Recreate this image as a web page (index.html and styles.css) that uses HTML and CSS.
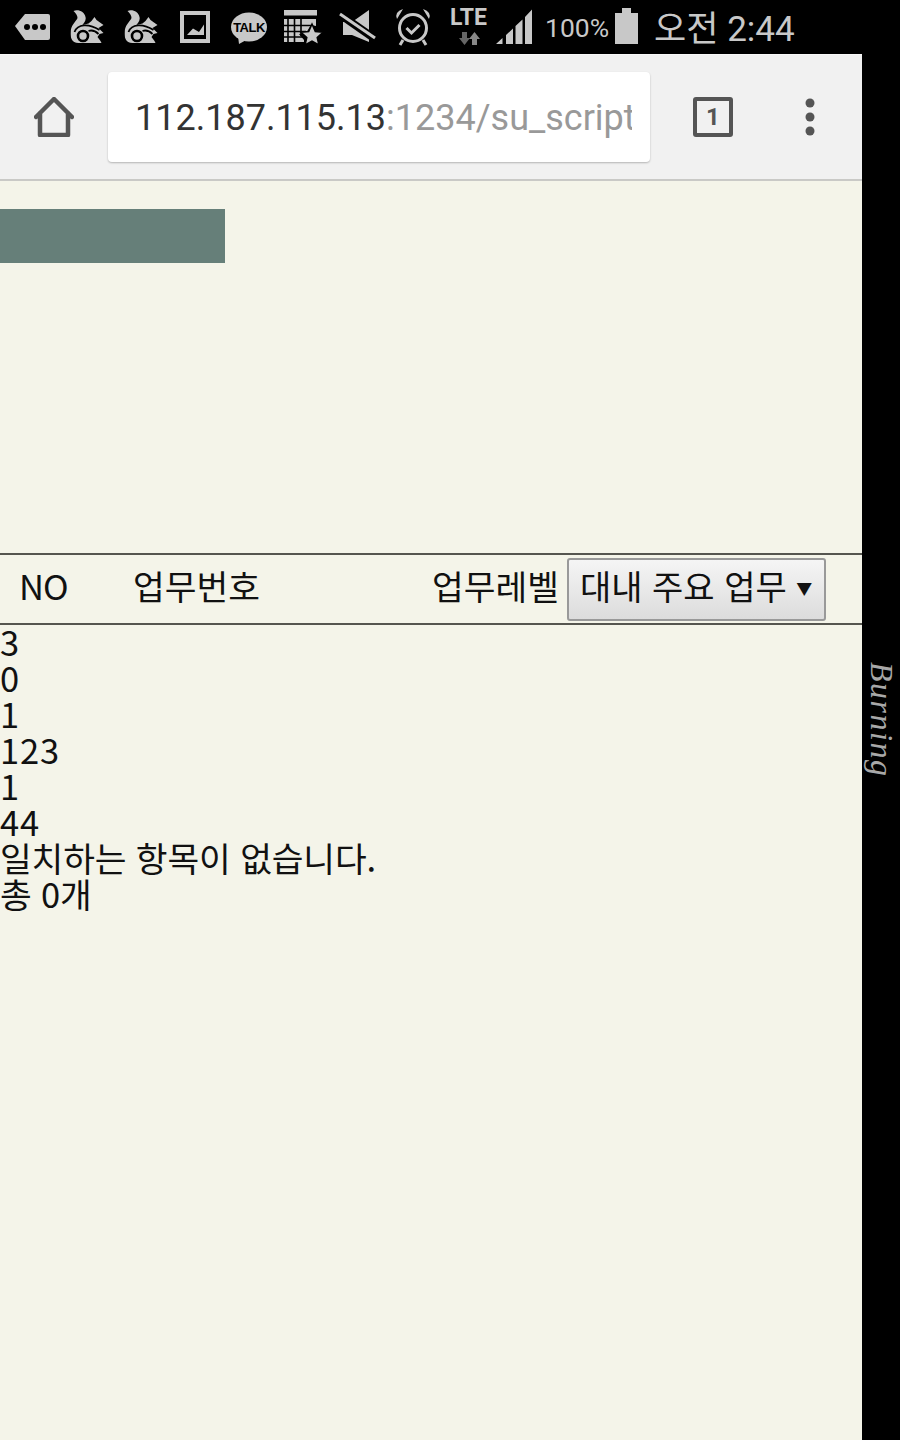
FILE: index.html
```html
<!DOCTYPE html>
<html lang="ko">
<head>
  <meta charset="UTF-8" />
  <meta name="viewport" content="width=device-width, initial-scale=1.0"/>
  <title>업무 목록</title>
  <link rel="stylesheet" href="styles.css">
</head>
<body>
<svg class="defs" width="0" height="0" aria-hidden="true">
  <symbol id="squirrel" viewBox="0 0 34 34">
    <path d="M3 1 C8 -1 14 2 15 7 C16 11 13 13 12 15 L18 13.500 L21 11 L24 7 L26 10 L33 15 L28 18 L33 23 L29 24 L27 27 L30 31 L31 33 L8 33 C1 33 0 27 0 23 C0 15 6 11 7 8 C7 5 5 3 3 1 Z"/>
    <path class="cut-line" d="M4 22 C7 14 18 13 29 20"/>
    <path class="cut-line" d="M18 21 C21 20 25 21 28 24"/>
    <circle class="cut-ring" cx="12.500" cy="26" r="5"/>
  </symbol>
</svg>

<div class="status-bar">
  <div class="notify-icons">
    <svg class="slot" viewBox="6 0 54 54">
      <path d="M15 26 L25 14 H48 Q50 14 50 16 V38 Q50 40 48 40 H25 Z"/>
      <circle class="cut" cx="27" cy="27" r="3"/><circle class="cut" cx="35" cy="27" r="3"/><circle class="cut" cx="43" cy="27" r="3"/>
    </svg>
    <svg class="slot" viewBox="60 0 54 54"><use href="#squirrel" x="70.500" y="10" width="34" height="34"/></svg>
    <svg class="slot" viewBox="114 0 54 54"><use href="#squirrel" x="124.500" y="10" width="34" height="34"/></svg>
    <svg class="slot" viewBox="168 0 54 54">
      <rect x="182" y="13" width="26" height="28" fill="none" stroke="currentColor" stroke-width="4"/>
      <path d="M187 35 L193 28.500 L199 32 L204 24.500 V35 Z"/>
    </svg>
    <svg class="slot" viewBox="222 0 54 54">
      <ellipse cx="249" cy="27" rx="18" ry="14.500"/>
      <path d="M238 36 L239 44 L248 39 Z"/>
      <text class="talk" x="249" y="31.500">TALK</text>
    </svg>
    <svg class="slot" viewBox="276 0 54 54">
      <rect x="284" y="10" width="33" height="5.500"/>
      <path d="M284 19 H316 V26 L311 25 L306 33 L299 34 L304 40 V42 H284 Z"/>
      <path class="grid-line" d="M288 19 V42 M294.500 19 V42 M301 19 V36 M284 25.500 H312 M284 31.500 H306 M284 37 H303"/>
      <path class="star" d="M312 24 L315.300 31.500 L323 32.300 L317.200 37.500 L318.900 45 L312 41 L305.100 45 L306.800 37.500 L301 32.300 L308.700 31.500 Z"/>
    </svg>
    <svg class="slot" viewBox="330 0 54 54">
      <path d="M369 10 L352 22 H343 V35 H352 L369 42 Z"/>
      <path class="cut-stroke" d="M338 13 L378 41"/>
      <path class="gray-stroke" d="M340 14 L375 38"/>
    </svg>
    <svg class="slot" viewBox="384 0 54 54">
      <circle cx="413" cy="28" r="13.500" fill="none" stroke="currentColor" stroke-width="3"/>
      <path d="M397 19 Q394 12 403 9 Z M429 19 Q432 12 423 9 Z"/>
      <path class="gray-stroke" d="M406.500 28 L411.500 33 L419.500 25"/>
      <path class="gray-stroke" d="M403 40 L400 45 M423 40 L426 45"/>
    </svg>
    <svg class="slot" viewBox="438 0 54 54">
      <text class="lte" x="468.500" y="25">LTE</text>
      <path class="arrow-down" d="M462 32 H467 V38 H470 L464.500 45 L459 38 H462 Z"/>
      <path class="arrow-up" d="M472 45 H477 V39 H480 L474.500 32 L469 39 H472 Z"/>
    </svg>
    <svg class="signal" viewBox="492 0 40 54">
      <path d="M496 44 L502.500 38 V44 Z M506 35 L513 28.500 V44 H506 Z M515.500 26 L522.500 19.500 V44 H515.500 Z M525 17 L532 9.500 V44 H525 Z"/>
    </svg>
  </div>
  <span class="battery-text">100%</span>
  <svg class="battery" viewBox="0 0 24 38">
    <path d="M7 0 H16 V5 H23 V36 H0 V5 H7 Z"/>
  </svg>
  <span class="clock">오전 2:44</span>
</div>

<div class="screen">
  <div class="main">
    <div class="toolbar">
      <svg class="home" viewBox="34 97 40 40">
        <path d="M36 117 L54 99 L72 117 M40 113 V135 H68 V113"/>
      </svg>
      <div class="url-box"><span class="host">112.187.115.13</span>:1234/su_script</div>
      <div class="tab-count">1</div>
      <svg class="menu-dots" viewBox="0 0 10 38">
        <circle cx="5" cy="5" r="4.500"/><circle cx="5" cy="19" r="4.500"/><circle cx="5" cy="33" r="4.500"/>
      </svg>
    </div>

    <div class="page">
      <div class="title-bar"></div>

      <div class="table-head">
        <span class="col-no">NO</span>
        <span class="col-num">업무번호</span>
        <span class="col-level">업무레벨</span>
        <button class="level-select">대내 주요 업무 <span class="caret">▼</span></button>
      </div>

      <div class="rows">
        <div class="num">3</div>
        <div class="num">0</div>
        <div class="num">1</div>
        <div class="num">123</div>
        <div class="num">1</div>
        <div class="num">44</div>
        <div>일치하는 항목이 없습니다.</div>
        <div>총 0개</div>
      </div>
    </div>
  </div>

  <div class="rail"><span class="burning">Burning</span></div>
</div>
</body>
</html>
```

FILE: styles.css
```css
html, body {
  margin: 0;
  height: 1440px;
  overflow: hidden;
  background-color: #000;
}
.defs {
  position: absolute;
}

/* status bar */
.status-bar {
  height: 54px;
  background-color: #000;
  color: #c8c8c8;
  display: flex;
  align-items: center;
  padding-left: 6px;
}
.notify-icons {
  display: flex;
}
.status-bar svg {
  display: block;
  fill: currentColor;
}
.slot {
  width: 54px;
  height: 54px;
}
.signal {
  width: 40px;
  height: 54px;
}
.cut {
  fill: #000;
}
.cut-line {
  fill: none;
  stroke: #000;
  stroke-width: 1.800;
}
.cut-ring {
  fill: #c8c8c8;
  stroke: #000;
  stroke-width: 2.600;
}
.grid-line {
  fill: none;
  stroke: #000;
  stroke-width: 1.600;
}
.status-bar .star {
  fill: #c8c8c8;
  stroke: #000;
  stroke-width: 1.500;
}
.cut-stroke {
  fill: none;
  stroke: #000;
  stroke-width: 8;
}
.gray-stroke {
  fill: none;
  stroke: #c8c8c8;
  stroke-width: 3;
}
.talk {
  font-family: "Liberation Sans", sans-serif;
  font-size: 13px;
  font-weight: bold;
  text-anchor: middle;
  fill: #000;
  letter-spacing: -0.500px;
}
.lte {
  font-family: Roboto, sans-serif;
  font-size: 23px;
  font-weight: bold;
  text-anchor: middle;
}
.status-bar .arrow-down {
  fill: #666;
}
.status-bar .arrow-up {
  fill: #888;
}
.battery-text {
  margin-left: 13px;
  font-family: Roboto, sans-serif;
  font-size: 26.500px;
}
.battery {
  width: 24px;
  height: 38px;
  margin-left: 6px;
}
.clock {
  margin-left: 15px;
  padding-top: 5px;
  font-family: Roboto, "Noto Sans CJK KR", sans-serif;
  font-size: 35px;
  line-height: 49px;
}

/* browser chrome */
.screen {
  display: flex;
  height: 1386px;
}
.main {
  width: 862px;
  display: flex;
  flex-direction: column;
  background-color: #f4f4e9;
}
.toolbar {
  height: 127px;
  box-sizing: border-box;
  background-color: #f1f1f1;
  border-top: 1px solid #f8f8f8;
  border-bottom: 2px solid #c9c9c6;
  display: flex;
  align-items: center;
  padding-left: 34px;
}
.home {
  width: 40px;
  height: 40px;
  fill: none;
  stroke: #555;
  stroke-width: 4.500;
  stroke-linejoin: round;
  stroke-linecap: round;
}
.url-box {
  width: 542px;
  height: 90px;
  box-sizing: border-box;
  margin-left: 34px;
  padding-left: 27px;
  margin-right: 43px;
  background-color: #fff;
  border-right: 18px solid #fff;
  border-radius: 4px;
  box-shadow: 0 1px 2px rgba(0,0,0,0.25);
  font-family: Roboto, sans-serif;
  font-size: 36px;
  line-height: 93px;
  color: #999;
  white-space: nowrap;
  overflow: hidden;
}
.host {
  color: #333;
}
.tab-count {
  width: 40px;
  height: 40px;
  box-sizing: border-box;
  border: 4px solid #555;
  border-radius: 3px;
  font-family: Roboto, sans-serif;
  font-size: 24px;
  font-weight: bold;
  line-height: 33px;
  text-align: center;
  color: #555;
}
.menu-dots {
  width: 10px;
  height: 38px;
  margin-left: 72px;
  fill: #555;
}

/* page */
.page {
  flex: 1;
  font-family: "Noto Sans CJK KR", sans-serif;
  font-size: 34.500px;
  color: #111;
}
.title-bar {
  width: 225px;
  height: 54px;
  margin-top: 28px;
  background-color: #667f79;
}
.table-head {
  height: 72px;
  box-sizing: border-box;
  margin-top: 290px;
  border-top: 2px solid #55554f;
  border-bottom: 2px solid #55554f;
  display: flex;
  align-items: center;
  padding-left: 19px;
}
.table-head > span {
  margin-bottom: 8px;
}
.col-no {
  width: 114px;
  letter-spacing: -1px;
}
.col-num {
  width: 299px;
}
.col-level {
  width: 135px;
}
.level-select {
  width: 259px;
  height: 63px;
  box-sizing: border-box;
  margin-top: 1px;
  padding: 0 0 8px 11px;
  border: 2px solid #999;
  border-radius: 3px;
  background: linear-gradient(#f5f5f5, #dcdcdc);
  font-family: inherit;
  font-size: 34px;
  color: #111;
  text-align: left;
  white-space: nowrap;
}
.caret {
  font-size: 16px;
  vertical-align: 5px;
}
.rows {
  margin-top: -2px;
  line-height: 36px;
  letter-spacing: -0.150px;
}
.rows .num {
  letter-spacing: 0.800px;
}

/* black strip on the right */
.rail {
  flex: 1;
  background-color: #000;
  padding-top: 608px;
  display: flex;
  justify-content: center;
  align-items: flex-start;
}
.burning {
  writing-mode: vertical-rl;
  font-family: "Liberation Serif", serif;
  font-style: italic;
  font-size: 32px;
  letter-spacing: 1.500px;
  color: #a8a8a8;
}
```
